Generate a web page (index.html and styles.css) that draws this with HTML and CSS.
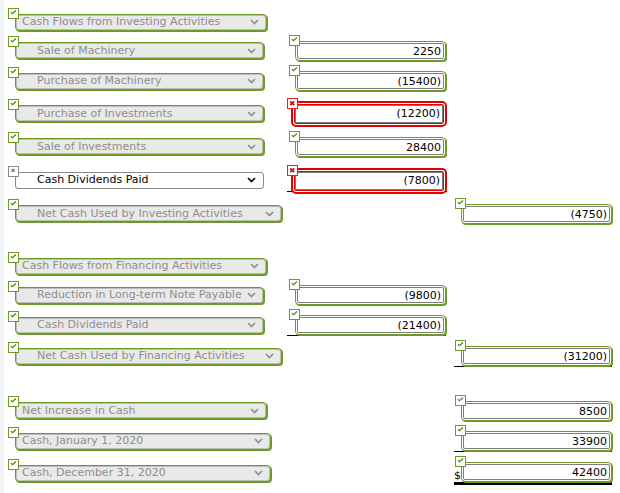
FILE: index.html
```html
<!DOCTYPE html>
<html>
<head>
<meta charset="utf-8">
<link rel="stylesheet" href="styles.css">
</head>
<body>
<svg class="sprite" width="0" height="0" aria-hidden="true">
  <symbol id="ok" viewBox="0 0 11 11">
    <rect x="0.5" y="0.5" width="10" height="10" fill="#fff" stroke="#6c9a22"/>
    <path d="M2.8 4.1 L4.5 5.7 L8 2.5" fill="none" stroke="#4f8a10" stroke-width="1.3"/>
  </symbol>
  <symbol id="bad" viewBox="0 0 11 11">
    <rect x="0.5" y="0.5" width="10" height="10" fill="#fff" stroke="#e02424"/>
    <path d="M3.3 3.3 L7.2 7.2 M7.2 3.3 L3.3 7.2" fill="none" stroke="#e00000" stroke-width="1.7"/>
  </symbol>
  <symbol id="none" viewBox="0 0 11 11">
    <rect x="0.5" y="0.5" width="10" height="10" fill="#fff" stroke="#8c8c8c"/>
    <path d="M3.6 2.8 L6.6 5.8 M6.6 2.8 L3.6 5.8" fill="none" stroke="#707070" stroke-width="1.2"/>
  </symbol>
  <symbol id="chev" viewBox="0 0 9 6">
    <path d="M1 1 L4.5 4.5 L8 1" fill="none" stroke="currentColor" stroke-width="1.6"/>
  </symbol>
</svg>

<main class="sheet">
  <div class="row h28">
    <div class="cell"><div class="slot s1"><div class="sel w252"><svg class="badge"><use href="#ok"/></svg><span>Cash Flows from Investing Activities</span><svg class="chev"><use href="#chev"/></svg></div></div></div>
    <div class="cell"></div>
    <div class="cell"></div>
  </div>
  <div class="row h29">
    <div class="cell"><div class="slot s1"><div class="sel w249 ind"><svg class="badge"><use href="#ok"/></svg><span>Sale of Machinery</span><svg class="chev"><use href="#chev"/></svg></div></div></div>
    <div class="cell"><div class="slot s2"><div class="field"><svg class="badge"><use href="#ok"/></svg><div class="val">2250</div></div></div></div>
    <div class="cell"></div>
  </div>
  <div class="row h32">
    <div class="cell"><div class="slot s1"><div class="sel w249 ind"><svg class="badge"><use href="#ok"/></svg><span>Purchase of Machinery</span><svg class="chev"><use href="#chev"/></svg></div></div></div>
    <div class="cell"><div class="slot s2"><div class="field"><svg class="badge"><use href="#ok"/></svg><div class="val">(15400)</div></div></div></div>
    <div class="cell"></div>
  </div>
  <div class="row h33">
    <div class="cell"><div class="slot s1"><div class="sel w249 ind"><svg class="badge"><use href="#ok"/></svg><span>Purchase of Investments</span><svg class="chev"><use href="#chev"/></svg></div></div></div>
    <div class="cell"><div class="slot s2"><div class="field bad"><svg class="badge"><use href="#bad"/></svg><div class="val">(12200)</div></div></div></div>
    <div class="cell"></div>
  </div>
  <div class="row h33">
    <div class="cell"><div class="slot s1"><div class="sel w249 ind"><svg class="badge"><use href="#ok"/></svg><span>Sale of Investments</span><svg class="chev"><use href="#chev"/></svg></div></div></div>
    <div class="cell"><div class="slot s2"><div class="field"><svg class="badge"><use href="#ok"/></svg><div class="val">28400</div></div></div></div>
    <div class="cell"></div>
  </div>
  <div class="row h34">
    <div class="cell"><div class="slot s1"><div class="sel w249 ind live"><svg class="badge"><use href="#none"/></svg><span>Cash Dividends Paid</span><svg class="chev"><use href="#chev"/></svg></div></div></div>
    <div class="cell"><div class="slot s2 ul"><div class="field bad"><svg class="badge"><use href="#bad"/></svg><div class="val">(7800)</div></div></div></div>
    <div class="cell"></div>
  </div>
  <div class="row h33">
    <div class="cell"><div class="slot s1"><div class="sel w267 ind"><svg class="badge"><use href="#ok"/></svg><span>Net Cash Used by Investing Activities</span><svg class="chev"><use href="#chev"/></svg></div></div></div>
    <div class="cell"></div>
    <div class="cell"><div class="slot s3"><div class="field"><svg class="badge"><use href="#ok"/></svg><div class="val">(4750)</div></div></div></div>
  </div>

  <div class="gap22"></div>

  <div class="row h28">
    <div class="cell"><div class="slot s1"><div class="sel w252"><svg class="badge"><use href="#ok"/></svg><span>Cash Flows from Financing Activities</span><svg class="chev"><use href="#chev"/></svg></div></div></div>
    <div class="cell"></div>
    <div class="cell"></div>
  </div>
  <div class="row h30">
    <div class="cell"><div class="slot s1"><div class="sel w249 ind"><svg class="badge"><use href="#ok"/></svg><span>Reduction in Long-term Note Payable</span><svg class="chev"><use href="#chev"/></svg></div></div></div>
    <div class="cell"><div class="slot s2"><div class="field"><svg class="badge"><use href="#ok"/></svg><div class="val">(9800)</div></div></div></div>
    <div class="cell"></div>
  </div>
  <div class="row h30">
    <div class="cell"><div class="slot s1"><div class="sel w249 ind"><svg class="badge"><use href="#ok"/></svg><span>Cash Dividends Paid</span><svg class="chev"><use href="#chev"/></svg></div></div></div>
    <div class="cell"><div class="slot s2 ul"><div class="field"><svg class="badge"><use href="#ok"/></svg><div class="val">(21400)</div></div></div></div>
    <div class="cell"></div>
  </div>
  <div class="row h32">
    <div class="cell"><div class="slot s1"><div class="sel w267 ind"><svg class="badge"><use href="#ok"/></svg><span>Net Cash Used by Financing Activities</span><svg class="chev"><use href="#chev"/></svg></div></div></div>
    <div class="cell"></div>
    <div class="cell"><div class="slot s3 ul"><div class="field"><svg class="badge"><use href="#ok"/></svg><div class="val">(31200)</div></div></div></div>
  </div>

  <div class="gap23"></div>

  <div class="row h31">
    <div class="cell"><div class="slot s1"><div class="sel w252"><svg class="badge"><use href="#ok"/></svg><span>Net Increase in Cash</span><svg class="chev"><use href="#chev"/></svg></div></div></div>
    <div class="cell"></div>
    <div class="cell"><div class="slot s3"><div class="field"><svg class="badge"><use href="#ok"/></svg><div class="val">8500</div></div></div></div>
  </div>
  <div class="row h30">
    <div class="cell"><div class="slot s1"><div class="sel w256"><svg class="badge"><use href="#ok"/></svg><span>Cash, January 1, 2020</span><svg class="chev"><use href="#chev"/></svg></div></div></div>
    <div class="cell"></div>
    <div class="cell"><div class="slot s3 ul"><div class="field"><svg class="badge"><use href="#ok"/></svg><div class="val">33900</div></div></div></div>
  </div>
  <div class="row h34">
    <div class="cell"><div class="slot s1"><div class="sel w256"><svg class="badge"><use href="#ok"/></svg><span>Cash, December 31, 2020</span><svg class="chev"><use href="#chev"/></svg></div></div></div>
    <div class="cell"></div>
    <div class="cell"><div class="slot s3 ul2 dollar"><span class="cur">$</span><div class="field"><svg class="badge"><use href="#ok"/></svg><div class="val">42400</div></div></div></div>
  </div>
</main>
</body>
</html>
```

FILE: styles.css
```css
html, body {
  margin: 0;
  padding: 0;
}
body {
  padding: 8px 0 0 8px;
  background: linear-gradient(to right, #f3f5f8 0, #f3f5f8 4px, #ffffff 4px);
  font-family: "DejaVu Sans", Verdana, sans-serif;
  font-size: 11px;
  color: #000;
  min-height: 493px;
  box-sizing: border-box;
}
.sprite {
  position: absolute;
  width: 0;
  height: 0;
  overflow: hidden;
}
.sheet {
  display: flex;
  flex-direction: column;
}
.row {
  display: grid;
  grid-template-columns: 279px 167px 158px;
  align-items: center;
}
.h28 { height: 28px; }
.h29 { height: 29px; }
.h30 { height: 30px; }
.h31 { height: 31px; }
.h32 { height: 32px; }
.h33 { height: 33px; }
.h34 { height: 34px; }
.gap22 { height: 22px; }
.gap23 { height: 23px; }

.cell {
  display: flex;
  align-items: center;
}
.slot {
  display: flex;
  align-items: flex-end;
}
.s1 { padding-left: 7px; }
.s2 { padding-left: 8px; }
.s3 { padding-left: 7px; }
.ul { border-bottom: 1px solid #000; }
.ul2 { border-bottom: 3px solid #000; }
.ul .bad { margin-bottom: -3px; }

.badge {
  position: absolute;
  width: 11px;
  height: 11px;
}

/* dropdowns */
.sel {
  position: relative;
  box-sizing: border-box;
  height: 17px;
  display: flex;
  align-items: center;
  justify-content: space-between;
  padding: 0 7px 0 6px;
  border: 1px solid #6c9a22;
  border-radius: 4px;
  box-shadow: 1px 1px 0 #6c9a22, inset 0 0 0 1px #bdbdbd;
  background: #e9e9e9;
  color: #8e8e8e;
  white-space: nowrap;
  line-height: 14px;
}
.sel .badge { left: -8px; top: -7px; }
.sel.ind { padding-left: 21px; }
.w249 { width: 249px; }
.w252 { width: 252px; }
.w256 { width: 256px; }
.w267 { width: 267px; }
.chev {
  width: 9px;
  height: 6px;
  color: #8e8e8e;
  flex: none;
}
.sel.live {
  background: #fff;
  color: #000;
  border-color: #8a8a8a;
  box-shadow: inset 0 0 0 1px #fff, inset 0 -2px 0 -1px #9a9a9a;
  border-radius: 3px;
}
.sel.live .chev {
  color: #000;
}
.sel.live .chev use {
  stroke-width: 2;
}

/* number inputs */
.field {
  position: relative;
  box-sizing: border-box;
  width: 151px;
  height: 20px;
  padding: 1px;
  border: 1px solid #6c9a22;
  border-radius: 4px;
  box-shadow: 1px 1px 0 #6c9a22;
  background: #fff;
}
.field .badge { left: -7px; top: -7px; }
.val {
  box-sizing: border-box;
  height: 100%;
  border: 1px solid #7d7d7d;
  border-radius: 2px;
  text-align: right;
  padding-right: 2px;
  line-height: 15px;
  color: #000;
  white-space: nowrap;
}
.field.bad {
  width: 156px;
  height: 26px;
  margin-left: -4px;
  padding: 1px;
  border: 2px solid #e00000;
  border-radius: 5px;
  box-shadow: none;
}
.field.bad .badge { left: -6px; top: -5px; }
.field.bad .val {
  border-color: #e00000;
  box-shadow: inset 0 0 0 1px #7d7d7d;
  padding-right: 3px;
  line-height: 17px;
}
.dollar { padding-left: 0; }
.cur {
  width: 7px;
  line-height: 12px;
  font-size: 11px;
}
```
